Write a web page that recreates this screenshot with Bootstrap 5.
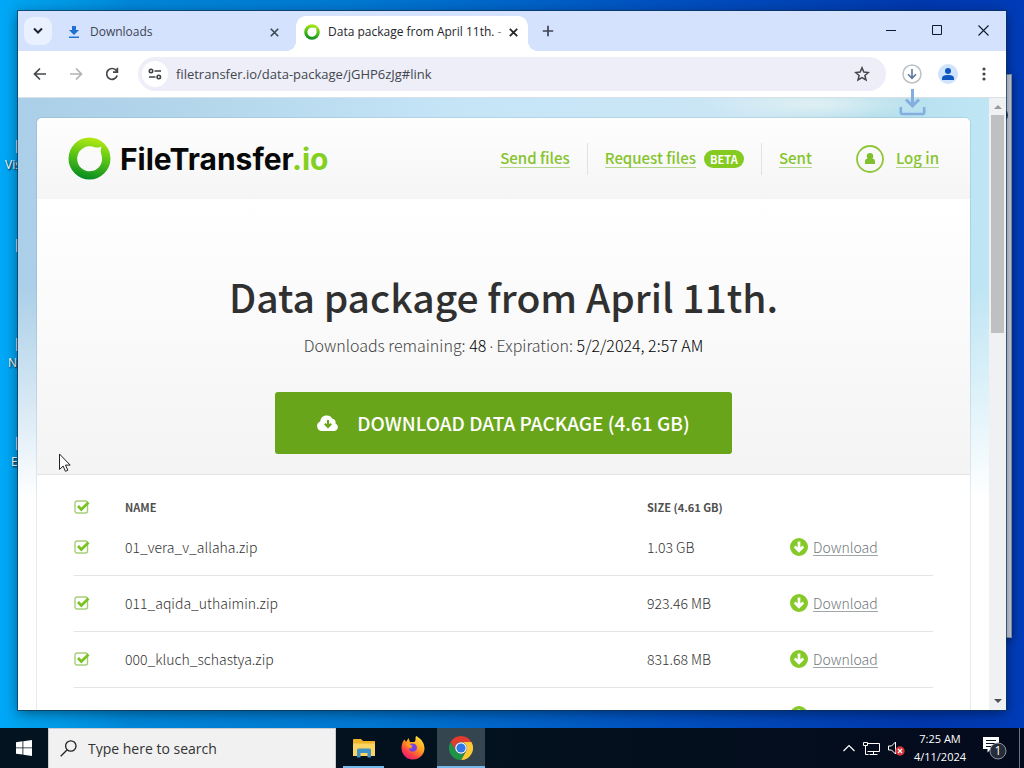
<!DOCTYPE html>
<html lang="en">
<head>
<meta charset="utf-8">
<meta name="viewport" content="width=device-width, initial-scale=1">
<title>Data package from April 11th.</title>
<link href="https://cdn.jsdelivr.net/npm/bootstrap@5.3.0/dist/css/bootstrap.min.css" rel="stylesheet">
<style>
  :root { --ui: "Open Sans", "Noto Sans", sans-serif; --site: "Noto Sans CJK SC", "Open Sans", sans-serif; --green: #86c42c; }
  body { font-family: var(--ui); font-size: 12px; line-height: 16px; background: #00a8f8; }
  svg { display: block; flex: none; }
  button { padding: 0; border: 0; background: none; color: inherit; display: flex; align-items: center; justify-content: center; flex: none; }
  .desktop-area { min-height: 0; padding: 11px 18px 18px; background:
    linear-gradient(90deg, #00a8f8 0, #00a2ee 20px, rgba(0,160,236,0) 130px),
    linear-gradient(90deg, #008edc 0%, #0078d2 35%, #0050c0 65%, #0038ae 90%, #003cb8 100%); }
  .shortcut { left: 0; width: 60px; color: #fff; text-shadow: 1px 1px 2px #000; }
  .shortcut::before { content: ""; position: absolute; left: 16px; top: -17px; width: 30px; height: 13px; background: #b8d8f4; }
  .rear-window { top: 74px; right: 12px; width: 200px; height: 564px; background: #c9d0dc; border: 1px solid #8294ac; box-shadow: 0 2px 8px rgba(0,0,0,.4); }
  .rear-window::after { content: ""; position: absolute; right: 3px; top: 33px; width: 14px; height: 14px; border-radius: 50%; background: #173764; }
  .browser { background: #fff; box-shadow: 0 0 0 1px rgba(10,50,90,.7), 0 3px 12px rgba(0,0,0,.45); min-height: 0; }
  .tabstrip { height: 40px; background: #d5e2fd; padding-left: 6px; color: #3c4454; flex: none; }
  .tab-search { width: 28px; height: 28px; border-radius: 9px; background: #e9f0fe; color: #1f2330; }
  .tab-item { width: 236px; height: 34px; padding: 2px 13px 0 11px; gap: 9px; }
  .tab-item.current { background: #fff; border-radius: 10px 10px 0 0; color: #24262b; align-self: flex-end; width: 232px; height: 35px; padding: 0 8px 3px; gap: 8px; }
  .tab-item.current::before, .tab-item.current::after { content: ""; position: absolute; bottom: 0; width: 10px; height: 10px; }
  .tab-item.current::before { left: -10px; background: radial-gradient(circle at 0 0, transparent 10px, #fff 10px); }
  .tab-item.current::after { right: -10px; background: radial-gradient(circle at 100% 0, transparent 10px, #fff 10px); }
  .tab-title { white-space: nowrap; }
  .new-tab { margin-left: 14px; }
  .win-btn { width: 46px; height: 38px; color: #111a2c; }
  .toolbar-row { height: 47px; padding: 0 4px; border-bottom: 1px solid #d8e0e8; color: #44474c; background: #fff; flex: none; }
  .tool-btn { width: 36px; height: 36px; }
  .omnibox { height: 34px; margin: 0 8px; border-radius: 17px; background: #edeef8; padding: 0 12px 0 4px; }
  .site-info { width: 26px; height: 26px; border-radius: 50%; background: #fff; }
  .omnibox input { border: 0; background: none; outline: 0; padding: 0; font-size: 13px; color: #43464e; }
  .download-flash { right: 80px; top: 78px; z-index: 3; }

  .viewport-row { min-height: 0; flex: 1 1 0; }
  .page-pane { padding: 20px 19px 0; background:
    linear-gradient(180deg, rgba(255,255,255,0) 0, rgba(255,255,255,0) 190px, rgba(255,255,255,.55) 310px, #fff 400px),
    radial-gradient(ellipse 110px 18px at 82% 6px, #e0f0f3, transparent),
    linear-gradient(90deg, #abcfe8 0%, #b3d6eb 18%, #c5e5f7 45%, #cbe6f5 75%, #b3deec 88%, #c0e6f4 100%); font-family: var(--site); }
  .sheet { background: #fff; border-radius: 5px 5px 0 0; box-shadow: 0 0 0 1px rgba(70,110,130,.14); min-width: 0; }
  .site-head { height: 81px; padding: 0 31px; background: linear-gradient(#fefefe, #f5f5f5); border-radius: 5px 5px 0 0; }
  .brand-name { font: 700 30px/40px Inter, sans-serif; color: #080808; margin-left: 9px; }
  .site-head .brand-name span { color: #84d020; }
  .site-head a { color: var(--green); }
  .site-nav { font-size: 15px; line-height: 18px; font-weight: 500; }
  .site-nav a { text-decoration: none; border-bottom: 1px solid #b4d68a; white-space: nowrap; }
  .nav-rule { width: 1px; height: 32px; background: #e2e2e2; margin: 0 17px; }
  .account-mark { margin: 0 12px 0 44px; }
  .beta-pill { font-size: 11px; line-height: 18px; font-weight: 700; color: #fff; background: #84ca20; border-radius: 9px; width: 40px; text-align: center; margin-left: 8px; }
  .hero { height: 276px; padding-top: 69px; background: linear-gradient(#fff, #f4f4f4); border-bottom: 1px solid #e2e4e6; text-align: center; }
  .hero h1 { font-size: 39px; line-height: 56px; font-weight: 500; color: #303030; margin: 0; }
  .hero p { font-size: 16px; line-height: 20px; font-weight: 300; color: #444; margin: 11px 0 37px; height: 20px; }
  .hero p b { font-weight: 300; color: #000; }
  .hero p i { font: 400 12px/16px "Open Sans", sans-serif; }
  .big-download { width: 457px; max-width: 100%; height: 62px; margin: 0 auto; border-radius: 3px; background: #69a51a; color: #fff; font-size: 19px; line-height: 24px; font-weight: 500; gap: 18px; }
  .files { padding: 11px 37px 0 37px; color: #333; font-size: 14px; font-weight: 300; }
  .file-table { width: 100%; table-layout: fixed; }
  .file-table th { height: 41px; font-size: 11px; font-weight: 700; padding: 0; color: #505050; }
  .file-table td { height: 56px; padding: 0; border-bottom: 1px solid #e4e4e4; }
  .file-table tbody tr:first-child td { height: 48px; padding-bottom: 7px; }
  .c-check { width: 51px; } .c-size { width: 143px; } .c-get { width: 143px; }
  .pick { appearance: none; display: block; width: 16px; height: 16px; margin: 0; background: url("data:image/svg+xml,%3Csvg xmlns='http://www.w3.org/2000/svg' viewBox='0 0 16 16'%3E%3Crect x='1' y='2' width='12.5' height='12' rx='2' fill='none' stroke='%23a4cf78' stroke-width='1.4'/%3E%3Cpath d='M4 7l3.3 3.5L14.5 3.5' fill='none' stroke='%237cc223' stroke-width='2.7'/%3E%3C/svg%3E"); }
  .get-link { color: #72787c; display: flex; align-items: center; gap: 5px; line-height: 18px; text-decoration: none; }
  .get-link span { border-bottom: 1px solid #a2a7aa; line-height: 16px; }
  .scroll-track { width: 17px; background: #f0f1f2; padding: 4px 0 3px; color: #505050; }
  .scroll-thumb { width: 13px; height: 218px; background: #bfc0c2; margin-top: 5px; }

  .task-bar { height: 40px; background: linear-gradient(90deg, #031420, #04101e 60%, #030a1c); color: #fff; flex: none; }
  .start-btn, .task-btn { width: 48px; height: 40px; }
  .task-btn { position: relative; width: 49px; }
  .task-btn.open::after { content: ""; position: absolute; bottom: 0; left: 4px; right: 4px; height: 2px; background: #76b9ed; }
  .task-btn.active { background: #34454f; width: 48px; }
  .task-btn.active::after { left: 0; right: 0; }
  .task-search { width: 288px; margin-right: 3px; background: #f1f1f1; color: #222; padding-left: 11px; gap: 11px; border: 1px solid #c8ccd0; border-bottom: 0; }
  .task-search input { border: 0; background: none; outline: 0; padding: 0; font-size: 14px; width: 220px; }
  .task-search input::placeholder { color: #333; opacity: 1; }
  .clock { width: 62px; line-height: 18px; text-align: center; font-size: 11px; white-space: nowrap; }
  .pointer { left: 58px; top: 453px; z-index: 5; }
</style>
</head>
<body>
<svg width="0" height="0" class="position-absolute" aria-hidden="true">
  <defs>
    <linearGradient id="ring" x1="0.6" y1="0" x2="0.4" y2="1"><stop offset="0" stop-color="#b7ea14"/><stop offset=".45" stop-color="#5cc615"/><stop offset="1" stop-color="#048a22"/></linearGradient>
    <symbol id="mark-ring" viewBox="0 0 43 43"><path fill="url(#ring)" fill-rule="evenodd" d="M21.500 .5a21 21 0 1 1 0 42a21 21 0 1 1 0-42zM33.500 9.500c-3 1.500-5 1-7 .7a12.500 12.500 0 1 0 6.500 6.300c-.4-2-.3-4.500.5-7z"/></symbol>
    <symbol id="get-dot" viewBox="0 0 18 18"><circle cx="9" cy="9" r="9" fill="#84c927"/><path d="M9 3.500v9M4.700 8.500L9 12.800l4.300-4.300" fill="none" stroke="#fff" stroke-width="2.700"/></symbol>
  </defs>
</svg>
<div class="d-flex flex-column vh-100 overflow-hidden position-relative">
  <main class="desktop-area flex-grow-1 d-flex flex-column position-relative">
    <div class="shortcut position-absolute" style="top:157px;padding-left:5px">Vis</div>
    <div class="shortcut position-absolute" style="top:256px">&nbsp;</div>
    <div class="shortcut position-absolute" style="top:355px;padding-left:8px">N</div>
    <div class="shortcut position-absolute" style="top:454px;padding-left:11px">E</div>
    <div class="rear-window position-absolute"></div>

    <section class="browser flex-grow-1 d-flex flex-column position-relative">
      <div class="tabstrip d-flex align-items-center">
        <button class="tab-search" aria-label="Search tabs"><svg width="10" height="8" viewBox="0 0 10 8"><path d="M1 1.500l4 4 4-4" fill="none" stroke="currentColor" stroke-width="2"/></svg></button>
        <div class="tab-item d-flex align-items-center ms-1">
          <svg width="14" height="14" viewBox="0 0 14 14" fill="#2270d4"><path d="M5 1h4v4h3L7 10 2 5h3z"/><path d="M2 11.500h10V13H2z"/></svg>
          <span class="tab-title flex-grow-1">Downloads</span>
          <button aria-label="Close tab"><svg width="9" height="9" viewBox="0 0 9 9"><path d="M.8.8l7.400 7.400M8.200.8L.8 8.200" stroke="currentColor" stroke-width="1.600"/></svg></button>
        </div>
        <div class="tab-item current d-flex align-items-center position-relative ms-1">
          <svg width="16" height="16"><use href="#mark-ring"/></svg>
          <span class="tab-title">Data package from April 11th. <span class="text-black-50">-</span></span>
          <button class="ms-auto me-1" aria-label="Close tab"><svg width="9" height="9" viewBox="0 0 9 9"><path d="M.8.8l7.400 7.400M8.200.8L.8 8.200" stroke="currentColor" stroke-width="1.800"/></svg></button>
        </div>
        <button class="new-tab" aria-label="New tab"><svg width="12" height="12" viewBox="0 0 12 12"><path d="M6 .8v10.400M.8 6h10.400" stroke="currentColor" stroke-width="1.700"/></svg></button>
        <div class="d-flex ms-auto align-self-start">
          <button class="win-btn" aria-label="Minimize"><svg width="10" height="10"><path d="M0 5.500h10" stroke="currentColor"/></svg></button>
          <button class="win-btn" aria-label="Maximize"><svg width="10" height="10"><path d="M.5.5h9v9h-9z" fill="none" stroke="currentColor"/></svg></button>
          <button class="win-btn" aria-label="Close"><svg width="11" height="11"><path d="M.5.5l10 10M10.500.5l-10 10" stroke="currentColor" stroke-width="1.100"/></svg></button>
        </div>
      </div>

      <div class="toolbar-row d-flex align-items-center">
        <button class="tool-btn" aria-label="Back"><svg width="14" height="14" viewBox="0 0 14 14"><path d="M13 7H2M7 1.500L1.500 7 7 12.500" fill="none" stroke="currentColor" stroke-width="1.700"/></svg></button>
        <button class="tool-btn text-black-50" aria-label="Forward"><svg width="14" height="14" viewBox="0 0 14 14" opacity=".6"><path d="M1 7h11M7 1.500L12.500 7 7 12.500" fill="none" stroke="currentColor" stroke-width="1.700"/></svg></button>
        <button class="tool-btn" aria-label="Reload"><svg width="14" height="14" viewBox="0 0 14 14"><path d="M12.200 8.500A5.400 5.400 0 1 1 11 3.200l1 1M12.400.8v4.300H8" fill="none" stroke="currentColor" stroke-width="1.700"/></svg></button>
        <div class="omnibox d-flex align-items-center flex-grow-1">
          <button class="site-info" aria-label="Site information"><svg width="14" height="12" viewBox="0 0 14 12" fill="none" stroke="#3c3f44" stroke-width="1.600"><circle cx="3" cy="3" r="1.700"/><path d="M6.500 3H13M1 9h6.500"/><circle cx="10.800" cy="9" r="1.700"/></svg></button>
          <input class="flex-grow-1 ms-2" type="text" aria-label="Address" value="filetransfer.io/data-package/jGHP6zJg#link">
          <button class="pe-1" aria-label="Bookmark"><svg width="16" height="16" viewBox="0 0 16 16"><path d="M8 1.800l1.800 4.300 4.600.4-3.500 3 1.100 4.500-4-2.400L4 14l1.100-4.500-3.500-3 4.600-.4z" fill="none" stroke="currentColor" stroke-width="1.500"/></svg></button>
        </div>
        <button class="tool-btn" aria-label="Downloads"><svg width="20" height="20" viewBox="0 0 20 20" fill="none"><circle cx="10" cy="10" r="9" stroke="#bcc1c6" stroke-width="1.500"/><path d="M10 5v9M6 10.300l4 4 4-4" stroke="#58769f" stroke-width="1.600"/></svg></button>
        <button class="tool-btn" aria-label="Profile"><svg width="20" height="20" viewBox="0 0 20 20"><circle cx="10" cy="10" r="10" fill="#d0e3fc"/><circle cx="10" cy="7" r="3" fill="#0f56c0"/><path d="M4 16v-1.500c0-3 3-3.500 6-3.500s6 .5 6 3.500V16z" fill="#0f56c0"/></svg></button>
        <button class="tool-btn" aria-label="Menu"><svg width="4" height="16" viewBox="0 0 4 16" fill="currentColor"><circle cx="2" cy="3" r="1.600"/><circle cx="2" cy="8" r="1.600"/><circle cx="2" cy="13" r="1.600"/></svg></button>
      </div>
      <svg class="download-flash position-absolute" width="27" height="27" viewBox="0 0 27 27" fill="none" stroke="#84aee0"><path d="M13.500 0v16M7 10.500l6.500 6.500 6.500-6.500" stroke-width="3"/><path d="M1.800 18v5.500a1.500 1.500 0 0 0 1.500 1.500h20.400a1.500 1.500 0 0 0 1.500-1.500V18" stroke-width="2.600"/></svg>

      <div class="viewport-row d-flex overflow-hidden">
        <div class="page-pane flex-grow-1 overflow-hidden">
          <div class="sheet h-100">
            <header class="site-head d-flex align-items-center">
              <a class="d-flex align-items-center text-decoration-none" href="#"><svg width="43" height="43"><use href="#mark-ring"/></svg><strong class="brand-name">FileTransfer<span>.io</span></strong></a>
              <nav class="site-nav d-flex align-items-center ms-auto">
                <a href="#send">Send files</a>
                <span class="nav-rule"></span>
                <a href="#request">Request files</a><span class="beta-pill">BETA</span>
                <span class="nav-rule"></span>
                <a href="#sent">Sent</a>
                <svg class="account-mark" width="28" height="28" viewBox="0 0 28 28"><circle cx="14" cy="14" r="13" fill="none" stroke="#8fc63a" stroke-width="1.800"/><circle cx="14" cy="11.300" r="3.200" fill="#80c02c"/><path d="M9 19v-2.500q0-3 3-3h4q3 0 3 3V19z" fill="#80c02c"/></svg>
                <a href="#login">Log in</a>
              </nav>
            </header>
            <section class="hero">
              <h1>Data package from April 11th.</h1>
              <p>Downloads remaining: <b>48</b> <i>·</i> Expiration: <b>5/2/2024, 2:57 AM</b></p>
              <button class="big-download"><svg width="22" height="16" viewBox="0 0 22 16"><path d="M5 16a5 5 0 0 1-1.800-9.600A6.600 6.600 0 0 1 15.500 3.800a4 4 0 0 1 3 4.600A4 4 0 0 1 17.500 16z" fill="#fff"/><path d="M11 5v6M7.800 8.800L11 12l3.200-3.200" fill="none" stroke="#69a51a" stroke-width="2.200"/></svg>DOWNLOAD DATA PACKAGE (4.61 GB)</button>
            </section>
            <section class="files">
              <table class="file-table">
                <thead><tr>
                  <th class="c-check"><input class="pick" type="checkbox" checked aria-label="Select all"></th>
                  <th>NAME</th><th class="c-size">SIZE (4.61 GB)</th><th class="c-get"></th>
                </tr></thead>
                <tbody>
                  <tr><td><input class="pick" type="checkbox" checked aria-label="Select 01_vera_v_allaha.zip"></td><td>01_vera_v_allaha.zip</td><td>1.03 GB</td><td><a class="get-link" href="#f1"><svg width="18" height="18"><use href="#get-dot"/></svg><span>Download</span></a></td></tr>
                  <tr><td><input class="pick" type="checkbox" checked aria-label="Select 011_aqida_uthaimin.zip"></td><td>011_aqida_uthaimin.zip</td><td>923.46 MB</td><td><a class="get-link" href="#f2"><svg width="18" height="18"><use href="#get-dot"/></svg><span>Download</span></a></td></tr>
                  <tr><td><input class="pick" type="checkbox" checked aria-label="Select 000_kluch_schastya.zip"></td><td>000_kluch_schastya.zip</td><td>831.68 MB</td><td><a class="get-link" href="#f3"><svg width="18" height="18"><use href="#get-dot"/></svg><span>Download</span></a></td></tr>
                  <tr><td></td><td></td><td></td><td><a class="get-link" href="#f4" aria-label="Download"><svg width="18" height="18"><use href="#get-dot"/></svg></a></td></tr>
                </tbody>
              </table>
            </section>
          </div>
        </div>
        <div class="scroll-track d-flex flex-column align-items-center flex-shrink-0">
          <svg width="8" height="8" viewBox="0 0 8 8"><path d="M0 7l4-4 4 4z" fill="#9a9a9a"/></svg>
          <div class="scroll-thumb"></div>
          <svg class="mt-auto" width="8" height="11" viewBox="0 0 8 11"><path d="M0 3h8L4 7z" fill="currentColor"/></svg>
        </div>
      </div>
    </section>
    <svg class="pointer position-absolute" width="13" height="20" viewBox="0 0 13 20"><path d="M1.500 1v15.500l3.600-3.500 2.300 5.300 2.400-1-2.300-5.200h4.700z" fill="#fff" stroke="#222"/></svg>
  </main>

  <footer class="task-bar d-flex align-items-stretch">
    <button class="start-btn" aria-label="Start"><svg width="16" height="16" viewBox="0 0 16 16" fill="#fff"><path d="M0 2.200L6.500 1.300v6.200H0zM7.300 1.200L16 0v7.500H7.300zM0 8.300h6.500v6.300L0 13.700zM7.300 8.300H16V16l-8.700-1.200z"/></svg></button>
    <label class="task-search d-flex align-items-center"><svg width="17" height="17" viewBox="0 0 17 17" fill="none" stroke="#222" stroke-width="1.300"><circle cx="10.800" cy="6" r="5.200"/><path d="M7 10L.7 16.300"/></svg><input type="text" placeholder="Type here to search" aria-label="Search"></label>
    <button class="task-btn open" aria-label="File Explorer"><svg width="22" height="19" viewBox="0 0 22 19"><path d="M0 1q0-1 1-1h7l2 2h12v15H0z" fill="#f0b429"/><path d="M1 4.500h21V17H0V5.500z" fill="#fcd462"/><path d="M4 18.500V11q0-1.500 1.500-1.500h11Q18 9.500 18 11v7.500h-3.500V14h-7v4.500z" fill="#3f91c8"/></svg></button>
    <button class="task-btn" aria-label="Firefox"><svg width="24" height="24" viewBox="0 0 24 24"><defs><linearGradient id="fx" x1=".85" y1="0" x2=".2" y2="1"><stop offset="0" stop-color="#ffe83a"/><stop offset=".45" stop-color="#ff9a1e"/><stop offset=".75" stop-color="#ff3d47"/><stop offset="1" stop-color="#e01a7d"/></linearGradient></defs><path fill="url(#fx)" d="M15 0c4 2 8.500 6 8.500 12.500A11.500 11.500 0 1 1 .7 10C1 7 2.500 4.500 3.500 3.500L5 6l2.500-4 1.500 4c2 0 4 .3 5-.5C15 4 14 2 15 0z"/><path fill="#7542e5" d="M8 8.500c2-1.500 6-1.500 7.500 1.200 1.500 3-1 6-3.700 6-2.300 0-4-1.700-4-3.500 1 .8 3 .3 3.700-.8-1.700 0-3.200-1-3.500-2.900z"/><path fill="#ff9b22" d="M5 8c1-1 3-.8 4 .3l2.800 1.800c-1 .6-1.500 1-2 2-1.800-.6-4.500-1-4.800-4.100z"/></svg></button>
    <button class="task-btn open active" aria-label="Chrome"><svg width="24" height="24" viewBox="0 0 24 24"><path fill="#e33b2e" d="M12 0a12 12 0 0 1 10.400 6H12a6 6 0 0 0-5.200 9L1.600 6A12 12 0 0 1 12 0z"/><path fill="#fcc934" d="M22.400 6A12 12 0 0 1 12 24l5.200-9A6 6 0 0 0 12 6z"/><path fill="#1e9447" d="M12 24A12 12 0 0 1 1.600 6l5.200 9a6 6 0 0 0 10.400 0z"/><circle cx="12" cy="12" r="5.800" fill="#fff"/><circle cx="12" cy="12" r="4.600" fill="#3078e8"/></svg></button>
    <div class="d-flex align-items-center ms-auto">
      <svg class="me-2" width="12" height="8" viewBox="0 0 12 8"><path d="M.5 7L6 1.500 11.500 7" fill="none" stroke="#fff" stroke-width="1.200"/></svg>
      <svg class="me-2" width="17" height="15" viewBox="0 0 17 15" fill="none" stroke="#fff"><path d="M5 2.500h11.500v8H4.500M10.500 10.500v3M6.500 13.500h8M.5 1.500h4v3h-4zM2.500 4.500v9h3"/></svg>
      <svg class="me-1" width="17" height="15" viewBox="0 0 17 15"><path d="M.5 5h3l4-4v12l-4-4h-3z" fill="none" stroke="#fff"/><circle cx="12" cy="10" r="4.700" fill="#d63438"/><path d="M10 8l4 4M14 8l-4 4" stroke="#fff" stroke-width="1.200"/></svg>
      <div class="clock">7:25 AM<br>4/11/2024</div>
      <button class="start-btn" aria-label="Notifications"><svg width="26" height="24" viewBox="0 0 26 24"><path d="M1 1h16v12H9l-3.500 3.500V13H1z" fill="#fff"/><path d="M4 4.500h10M4 7.500h10M4 10.500h6" stroke="#071326"/><circle cx="16" cy="15" r="8" fill="#252c38" stroke="#8b929c"/><text x="16" y="19" text-anchor="middle" font-size="12" fill="#fff">1</text></svg></button>
      <span class="border-start border-secondary h-100 pe-1"></span>
    </div>
  </footer>
</div>
<script src="https://cdn.jsdelivr.net/npm/bootstrap@5.3.0/dist/js/bootstrap.bundle.min.js"></script>
</body>
</html>
